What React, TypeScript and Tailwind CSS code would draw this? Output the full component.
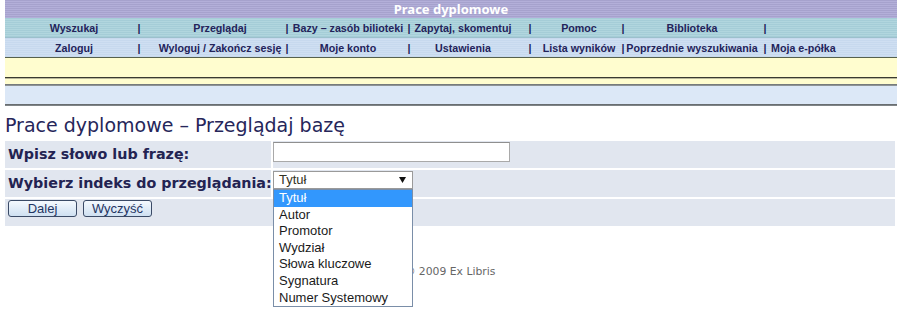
import React from "react";

const cols = [
  "w-[131px] pl-[7px]",
  "w-[142px] pl-[14px]",
  "w-[116px]",
  "w-[115px] pr-[13px]",
  "w-[87px] pl-[5px]",
  "w-[136px] pr-[4px]",
];

function MenuRow({ items, last, className }: { items: string[]; last?: string; className: string }) {
  return (
    <div className={`flex items-center font-['Liberation_Sans',Arial,sans-serif] font-bold text-[10.7px] leading-[12px] text-[#23235a] ${className}`}>
      {items.map((t, i) => (
        <React.Fragment key={i}>
          <div className={`shrink-0 flex justify-center whitespace-nowrap ${cols[i]}`}>{t}</div>
          <div className="shrink-0 w-[6px] flex justify-center">|</div>
        </React.Fragment>
      ))}
      <div className="flex-1 pl-[3px] whitespace-nowrap">{last}</div>
    </div>
  );
}

const options = ["Tytuł", "Autor", "Promotor", "Wydział", "Słowa kluczowe", "Sygnatura", "Numer Systemowy"];

export default function App() {
  return (
    <div className="w-[902px] h-[335px] bg-white overflow-hidden font-['DejaVu_Sans',Verdana,sans-serif]">
      <div className="mx-[5px]">
        <div className="h-[18px] flex items-center justify-center bg-[repeating-linear-gradient(to_bottom,#a6a2cd_0px,#a6a2cd_1px,#b3afd9_1px,#b3afd9_2px)] font-['Noto_Sans',sans-serif] font-bold text-[13px] leading-[14px] text-white">
          Prace dyplomowe
        </div>
        <MenuRow
          className="h-[20px] bg-[repeating-linear-gradient(to_bottom,#a5cdd7_0px,#a5cdd7_1px,#b1d6de_1px,#b1d6de_2px)] border-b border-[#9cc0cc]"
          items={["Wyszukaj", "Przeglądaj", "Bazy – zasób bilioteki", "Zapytaj, skomentuj", "Pomoc", "Biblioteka"]}
        />
        <MenuRow
          className="h-[19px] bg-[repeating-linear-gradient(to_bottom,#c7d9ee_0px,#c7d9ee_1px,#cfdff2_1px,#cfdff2_2px)]"
          items={["Zaloguj", "Wyloguj / Zakończ sesję", "Moje konto", "Ustawienia", "Lista wyników", "Poprzednie wyszukiwania"]}
          last="Moja e-półka"
        />
        <div className="h-[1px] bg-[#56604c]" />
        <div className="h-[19px] bg-[#fffdcf]" />
        <div className="h-[1px] bg-[#3a3a30]" />
        <div className="h-[1px] bg-[#b9b79a]" />
        <div className="h-[5px] bg-[#fffdcf]" />
        <div className="h-[2px] bg-[linear-gradient(to_bottom,#6a6f70,#9a9fa2)]" />
        <div className="h-[18px] bg-[#dce8f7]" />
        <div className="h-[2px] bg-[linear-gradient(to_bottom,#5d6265,#8a8f92)]" />
      </div>

      <div className="ml-[5px] mr-[7px]">
        <div className="mt-[8px] h-[22px] leading-[22px] text-[19px] text-[#26265a] whitespace-nowrap">
          Prace dyplomowe – Przeglądaj bazę
        </div>

        <div className="mt-[5px] flex flex-col gap-[2px]">
          <div className="h-[27px] flex gap-[2px]">
            <div className="w-[266px] shrink-0 bg-[#e1e6ef] pl-[3px] flex items-center text-[14.3px] font-bold text-[#232352] whitespace-nowrap">
              Wpisz słowo lub frazę:
            </div>
            <div className="flex-1 bg-[#e1e6ef] pt-[1px]">
              <div className="w-[237px] h-[20px] bg-white border border-[#a9a9a9] border-t-[#8f8f8f]" />
            </div>
          </div>

          <div className="h-[27px] flex gap-[2px]">
            <div className="w-[266px] shrink-0 bg-[#e1e6ef] pl-[3px] flex items-center text-[14.3px] font-bold text-[#232352] whitespace-nowrap">
              Wybierz indeks do przeglądania:
            </div>
            <div className="flex-1 bg-[#e1e6ef] pt-[1px]">
              <div className="relative w-[140px] z-10">
                <div className="h-[18px] bg-white border border-[#9a9a9a] flex items-center justify-between pl-[5px] pr-[6px] font-['Liberation_Sans',Arial,sans-serif] text-[13px] text-[#333324]">
                  <span>Tytuł</span>
                  <svg width="7" height="6" viewBox="0 0 7 6">
                    <path d="M0 0 H7 L3.5 6 Z" fill="#111" />
                  </svg>
                </div>
                <div className="absolute top-full left-0 w-[140px] bg-white border border-[#7a8ea8] font-['Liberation_Sans',Arial,sans-serif] text-[13px] text-[#1a1a1a]">
                  {options.map((o, i) => (
                    <div
                      key={o}
                      className={
                        i === 0
                          ? "h-[16.6px] leading-[16.6px] pl-[5px] bg-[#3297fd] text-white whitespace-nowrap"
                          : "h-[16.6px] leading-[16.6px] pl-[5px] whitespace-nowrap"
                      }
                    >
                      {o}
                    </div>
                  ))}
                </div>
              </div>
            </div>
          </div>

          <div className="h-[27px] bg-[#e1e6ef] pl-[3px] pt-[1px] flex items-start gap-[6px]">
            <button className="w-[69px] h-[17px] rounded-[3px] border border-[#3a4a66] bg-[linear-gradient(to_bottom,#f4f9fe,#cfe0f1)] font-['Liberation_Sans',Arial,sans-serif] text-[13px] leading-[15px] text-[#1f3563]">
              Dalej
            </button>
            <button className="w-[69px] h-[17px] rounded-[3px] border border-[#3a4a66] bg-[linear-gradient(to_bottom,#f4f9fe,#cfe0f1)] font-['Liberation_Sans',Arial,sans-serif] text-[13px] leading-[15px] text-[#1f3563]">
              Wyczyść
            </button>
          </div>
        </div>

        <div className="mt-[39px] h-[14px] leading-[14px] text-center text-[10.8px] text-[#666]">
          © 2009 Ex Libris
        </div>
      </div>
    </div>
  );
}
